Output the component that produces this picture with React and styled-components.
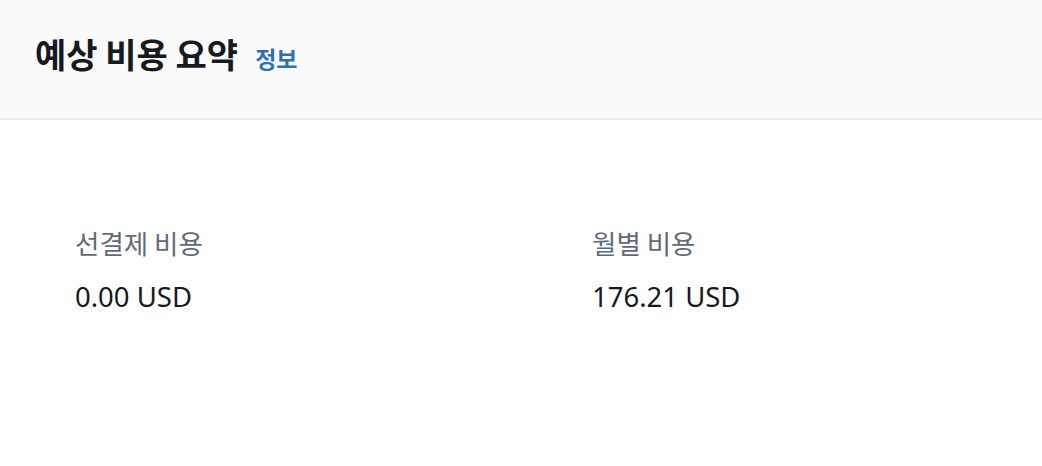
import React from "react";
import styled, { createGlobalStyle } from "styled-components";

const GlobalStyle = createGlobalStyle`
  body {
    margin: 0;
    background: #ffffff;
    font-family: "Noto Sans", "Noto Sans CJK KR", sans-serif;
  }
`;

const Panel = styled.section`
  width: 1042px;
  height: 466px;
  background: #ffffff;
`;

const Header = styled.header`
  display: flex;
  align-items: baseline;
  gap: 17px;
  height: 120px;
  box-sizing: border-box;
  padding: 30px 35px 0;
  background: #fafafa;
  border-bottom: 2px solid #e9ebed;
`;

const Title = styled.h2`
  margin: 0;
  font-family: "Noto Sans CJK KR", sans-serif;
  font-size: 34px;
  line-height: 48px;
  font-weight: 700;
  color: #16191f;
`;

const InfoLink = styled.a`
  font-family: "Noto Sans CJK KR", sans-serif;
  font-size: 23px;
  font-weight: 700;
  color: #2f6fb7;
  text-decoration: none;
  cursor: pointer;
`;

const Body = styled.div`
  display: grid;
  grid-template-columns: 517px 1fr;
  padding: 105px 35px 0 75px;
`;

const Item = styled.div`
  display: flex;
  flex-direction: column;
  gap: 18px;
`;

const Label = styled.div`
  font-family: "Noto Sans CJK KR", sans-serif;
  font-size: 26.5px;
  line-height: 36px;
  color: #5f6b7a;
`;

const Value = styled.div`
  font-family: "Noto Sans", sans-serif;
  font-size: 27.5px;
  line-height: 36px;
  color: #16191f;
`;

const costs = [
  { label: "선결제 비용", value: "0.00 USD" },
  { label: "월별 비용", value: "176.21 USD" },
];

export default function App() {
  return (
    <>
      <GlobalStyle />
      <Panel>
        <Header>
          <Title>예상 비용 요약</Title>
          <InfoLink>정보</InfoLink>
        </Header>
        <Body>
          {costs.map((c) => (
            <Item key={c.label}>
              <Label>{c.label}</Label>
              <Value>{c.value}</Value>
            </Item>
          ))}
        </Body>
      </Panel>
    </>
  );
}
